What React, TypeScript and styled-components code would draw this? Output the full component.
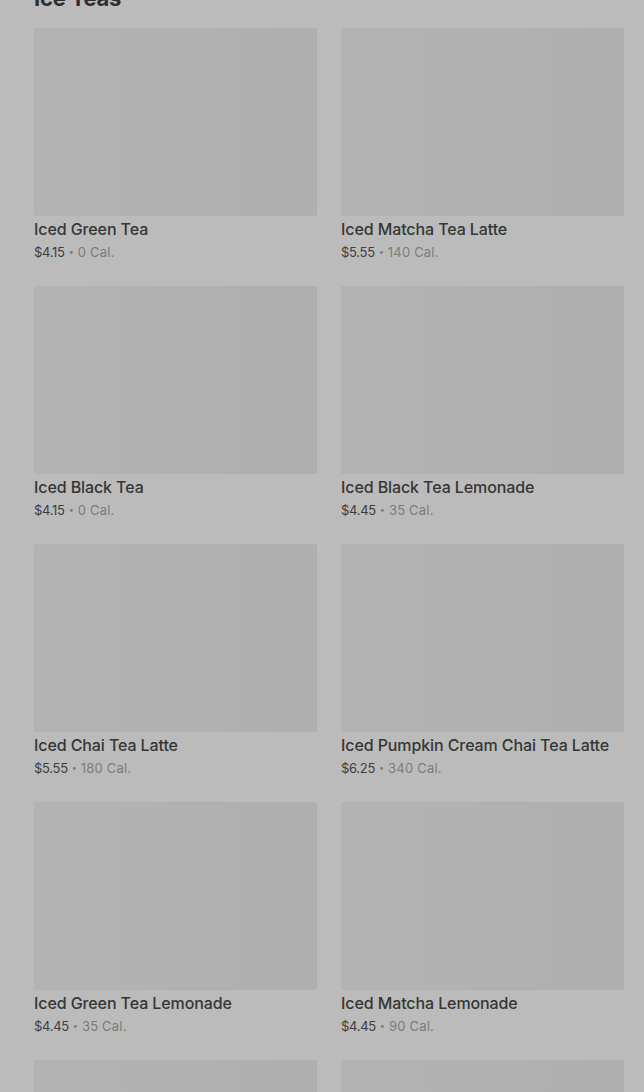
import styled, { createGlobalStyle } from "styled-components";

const GlobalStyle = createGlobalStyle`
  html, body {
    margin: 0;
    padding: 0;
    background: #bbbbbb;
  }
  body {
    font-family: Inter, "Noto Sans", sans-serif;
    overflow: hidden;
  }
`;

type Drink = {
  name: string;
  price: string;
  cal: string;
};

const drinks: Drink[] = [
  { name: "Iced Green Tea", price: "$4.15", cal: "0 Cal." },
  { name: "Iced Matcha Tea Latte", price: "$5.55", cal: "140 Cal." },
  { name: "Iced Black Tea", price: "$4.15", cal: "0 Cal." },
  { name: "Iced Black Tea Lemonade", price: "$4.45", cal: "35 Cal." },
  { name: "Iced Chai Tea Latte", price: "$5.55", cal: "180 Cal." },
  { name: "Iced Pumpkin Cream Chai Tea Latte", price: "$6.25", cal: "340 Cal." },
  { name: "Iced Green Tea Lemonade", price: "$4.45", cal: "35 Cal." },
  { name: "Iced Matcha Lemonade", price: "$4.45", cal: "90 Cal." },
  { name: "Iced Peach Green Tea", price: "$4.45", cal: "60 Cal." },
  { name: "Iced Passion Tango Tea", price: "$4.15", cal: "0 Cal." },
];

const App = () => {
  return (
    <>
      <GlobalStyle />
      <Page>
        <Heading>Ice Teas</Heading>
        <Grid>
          {drinks.map((d) => (
            <Card key={d.name}>
              <Photo />
              <Name>{d.name}</Name>
              <Meta>
                <Price>{d.price}</Price>
                <Dot>•</Dot>
                <Cal>{d.cal}</Cal>
              </Meta>
            </Card>
          ))}
        </Grid>
      </Page>
    </>
  );
};

const Page = styled.div`
  width: 644px;
  height: 1092px;
  overflow: hidden;
  box-sizing: border-box;
  padding: 0 20px 0 34px;
`;

const Heading = styled.h2`
  margin: -18px 0 0;
  height: 46px;
  font-size: 22px;
  line-height: 32px;
  font-weight: 700;
  color: #2f2f2f;
  letter-spacing: -0.2px;
`;

const Grid = styled.div`
  display: grid;
  grid-template-columns: 283px 283px;
  column-gap: 24px;
  row-gap: 24px;
`;

const Card = styled.div`
  display: flex;
  flex-direction: column;
`;

const Photo = styled.div`
  height: 188px;
  border-radius: 2px;
  background: linear-gradient(90deg, #b3b3b3 0%, #b1b1b1 50%, #afafaf 100%);
`;

const Name = styled.div`
  margin-top: 2px;
  font-size: 16px;
  line-height: 22px;
  font-weight: 500;
  color: #363636;
  letter-spacing: -0.1px;
  white-space: nowrap;
`;

const Meta = styled.div`
  margin-top: 2px;
  display: flex;
  align-items: center;
  gap: 4px;
  font-size: 13px;
  line-height: 20px;
`;

const Price = styled.span`
  color: #3e3e3e;
  letter-spacing: -0.3px;
`;

const Dot = styled.span`
  color: #7a7a7a;
  font-size: 9px;
`;

const Cal = styled.span`
  color: #7c7c7c;
  letter-spacing: 0.2px;
`;

export default App;
